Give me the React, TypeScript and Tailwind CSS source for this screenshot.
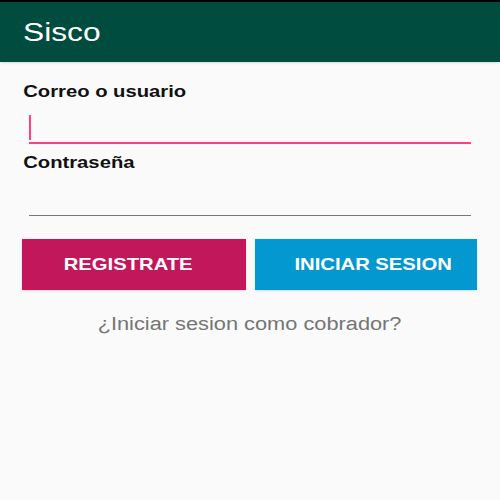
import React, { useState } from 'react';

const App: React.FC = () => {
  const [user, setUser] = useState("");
  const [pass, setPass] = useState("");

  return (
    <div className="w-[500px] h-[500px] overflow-hidden bg-[#fafafa] flex flex-col" style={{ fontFamily: '"Liberation Sans", Arial, sans-serif' }}>
      <div className="h-[2px] bg-black" />
      <div className="h-[60px] bg-[#004d40] flex items-center px-[23px] shadow-sm">
        <span className="inline-block origin-left scale-x-[1.22] text-white text-[26px] font-normal">Sisco</span>
      </div>
      <div className="flex flex-col px-[22px] pt-[20px]">
        <label className="self-start origin-left scale-x-[1.19] text-[17px] font-bold text-[#111] leading-5 pl-[1px]">Correo o usuario</label>
        <div className="mx-[7px] mt-[11px] h-[31px] border-b-2 border-[#ff4081] flex items-center">
          <div className="w-[2px] h-[25px] bg-[#ff4081]" />
          <input
            value={user}
            onChange={(e) => setUser(e.target.value)}
            className="flex-1 bg-transparent outline-none h-full"
          />
        </div>
        <label className="self-start origin-left scale-x-[1.19] text-[17px] font-bold text-[#111] leading-5 mt-[9px] pl-[1px]">Contraseña</label>
        <div className="mx-[7px] mt-[21px] h-[22px] border-b border-[#777]">
          <input
            type="password"
            value={pass}
            onChange={(e) => setPass(e.target.value)}
            className="w-full bg-transparent outline-none h-full"
          />
        </div>
        <div className="flex gap-[9px] mt-[23px]">
          <button className="w-[224px] h-[51px] pr-[11px] bg-[#c2185b] text-white font-bold text-[17px] shadow-sm">
            <span className="inline-block scale-x-[1.19]">REGISTRATE</span>
          </button>
          <button className="w-[222px] h-[51px] pl-[14px] bg-[#0398cf] text-white font-bold text-[17px] shadow-sm">
            <span className="inline-block scale-x-[1.19]">INICIAR SESION</span>
          </button>
        </div>
        <div className="text-center text-[#757575] text-[18px] mt-[21px]">
          <span className="inline-block scale-x-[1.21]">¿Iniciar sesion como cobrador?</span>
        </div>
      </div>
    </div>
  );
};

export default App;
